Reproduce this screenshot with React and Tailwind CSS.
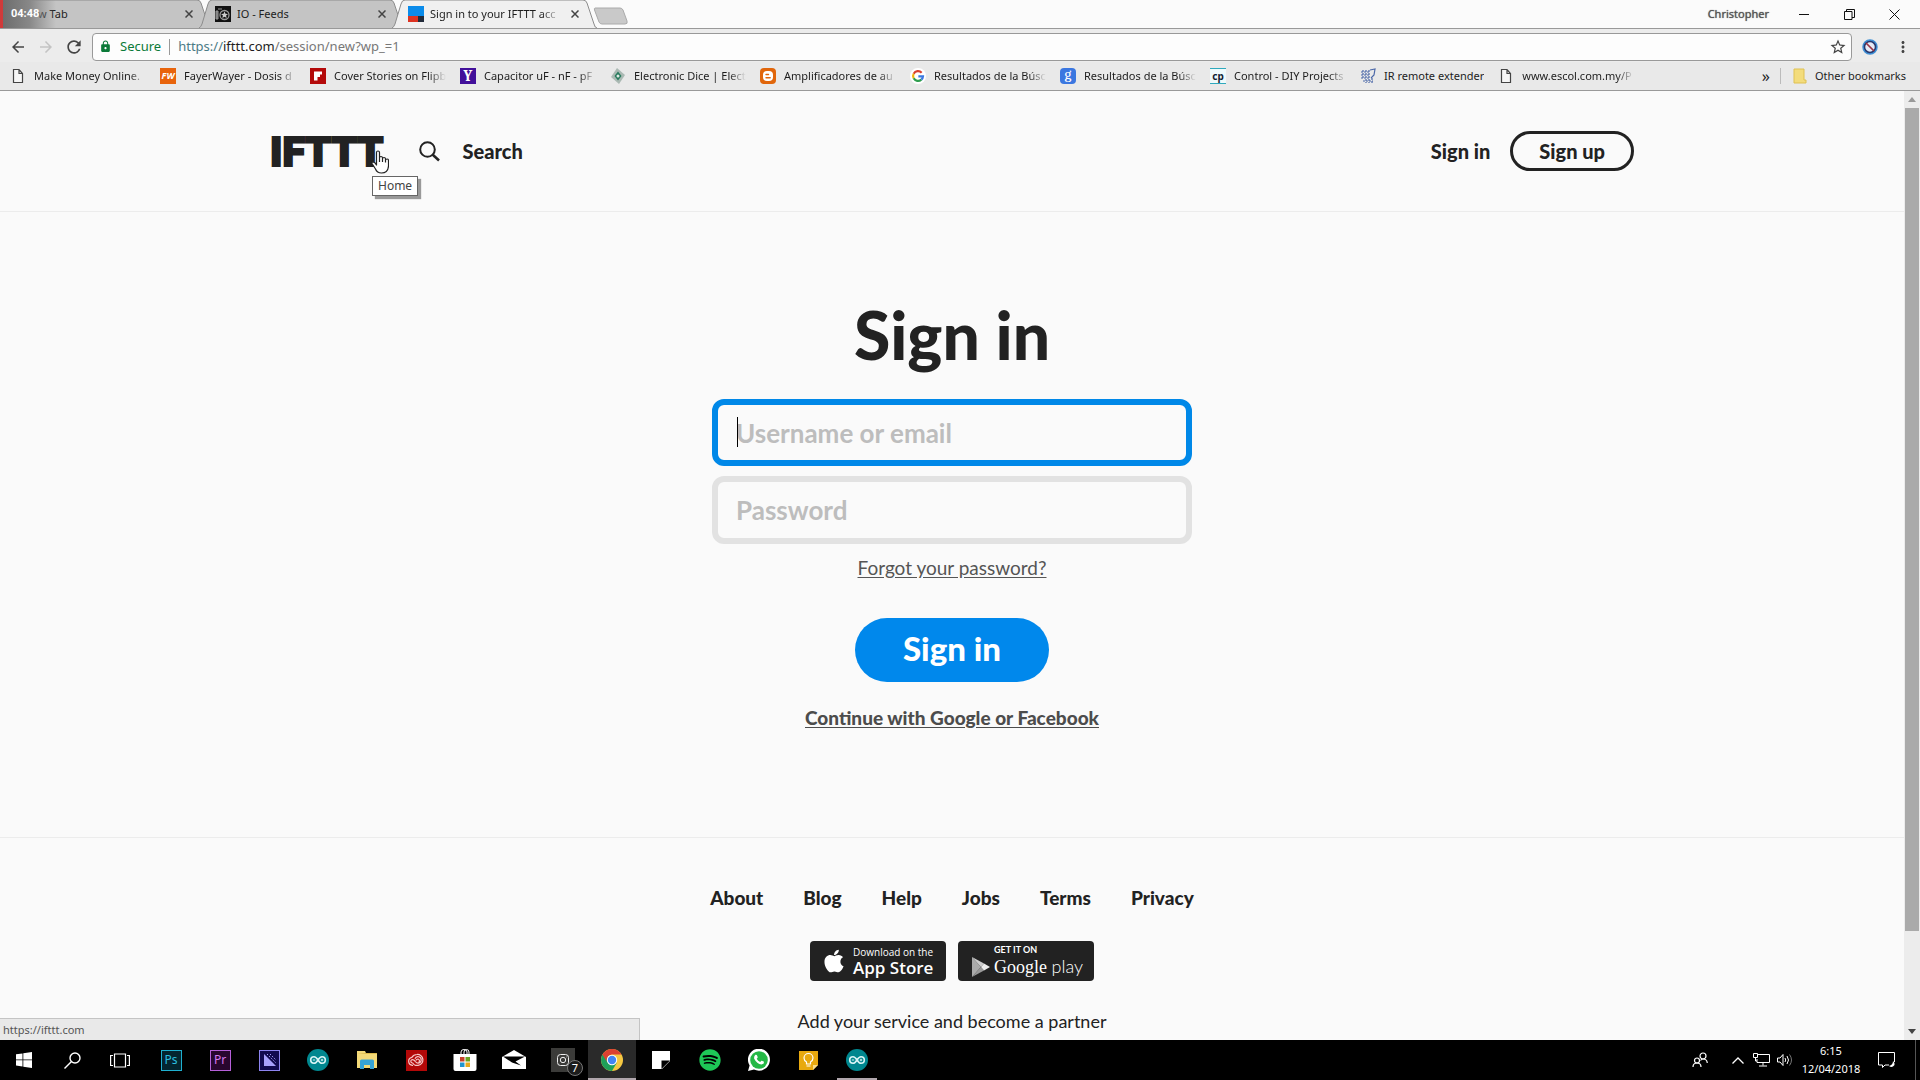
import React from 'react';
import { FaApple, FaSpotify } from 'react-icons/fa';
import { MdArrowBack, MdArrowForward, MdRefresh, MdLock, MdStarBorder, MdMoreVert } from 'react-icons/md';

const TabShape = ({ active }) => (
    <svg className="absolute inset-0 h-full w-full" viewBox="0 0 205 28" preserveAspectRatio="none" aria-hidden="true">
        <path d="M0 28 Q2 27 3 24 L9 4 Q10 0 13 0 H191 Q194 0 195 3 L202 24 Q203 28 205 28 Z" fill={active ? '#f0f0f0' : '#c4c4c4'} />
        <path d="M0 28 Q2 27 3 24 L9 4 Q10 0 13 0 H191 Q194 0 195 3 L202 24 Q203 28 205 28" fill="none" stroke="#8c8c8c" strokeWidth="1" />
    </svg>
);

const Tab = ({ title, icon, active, first }) => (
    <div className={`relative h-7 w-[205px] shrink-0 ${active ? 'z-10' : ''} ${first ? 'ml-1.5' : '-ml-3'}`}>
        <TabShape active={active} />
        <div className={`relative flex h-full items-center gap-1.5 pr-3.5 ${first ? 'pl-8' : 'pl-4'}`}>
            {icon}
            <span className={`min-w-0 flex-1 overflow-hidden whitespace-nowrap text-[#1d1d1d] ${active ? '[mask-image:linear-gradient(to_right,black_85%,transparent)]' : ''}`}>{title}</span>
            <button aria-label="Close tab" className="flex h-4 w-4 items-center justify-center">
                <svg viewBox="0 0 8 8" className="h-2 w-2" stroke="#444" strokeWidth="1.5"><path d="M0.5 0.5l7 7M7.5 0.5l-7 7" /></svg>
            </button>
        </div>
    </div>
);

const FeedsIcon = () => (
    <svg viewBox="0 0 16 16" className="h-4 w-4 shrink-0">
        <rect width="16" height="16" fill="#111" />
        <path d="M1 5h2v8H1zM3 3h4" stroke="#999" strokeWidth="1" fill="#777" />
        <circle cx="9.5" cy="9" r="4.5" fill="none" stroke="#999" strokeWidth="1.3" />
        <path d="M9.5 5.5l1 2.3 2.5.2-1.9 1.6.6 2.4-2.2-1.3-2.2 1.3.6-2.4L6 8l2.5-.2z" fill="#ccc" />
    </svg>
);

const IftttIcon = () => (
    <svg viewBox="0 0 16 16" className="h-4 w-4 shrink-0">
        <rect width="16" height="11" fill="#0a8bea" />
        <rect y="10" width="10" height="6" fill="#dd3322" />
        <rect x="10" y="10" width="6" height="6" fill="#222b3a" />
    </svg>
);

const DocIcon = () => (
    <svg viewBox="0 0 16 16" className="h-4 w-4 shrink-0" fill="#f6f6f6" stroke="#444" strokeWidth="1.2">
        <path d="M3.5 1.5h5.5l3.5 4v9h-9zM9 1.5v4h3.5" />
    </svg>
);

const Square = ({ bg, className = '', children }) => (
    <span className={`flex h-4 w-4 shrink-0 items-center justify-center ${bg} ${className}`}>{children}</span>
);

const bookmarks = [
    { title: 'Make Money Online.', icon: <DocIcon /> },
    { title: 'FayerWayer - Dosis d', icon: <Square bg="bg-[#e8640c]" className="text-[9px] font-bold italic text-white">FW</Square> },
    {
        title: 'Cover Stories on Flipb',
        icon: <Square bg="bg-[#b40a0a]"><svg viewBox="0 0 16 16" className="h-4 w-4" fill="#fff"><path d="M4 3.5h8v3H10v2.5H7.5v3.5H4z" /></svg></Square>,
    },
    {
        title: 'Capacitor uF - nF - pF',
        icon: <Square bg="bg-[#42109a]" className="font-serif text-[15px] font-bold text-white">Y</Square>,
    },
    {
        title: 'Electronic Dice | Elect',
        icon: (
            <svg viewBox="0 0 16 16" className="h-4 w-4 shrink-0">
                <path d="M7 0l8 7-6 9-8-7z" fill="#aab9b3" />
                <path d="M8 3.5l3.5 4.5L8 12.5 4.5 8z" fill="#277a5c" />
                <circle cx="8" cy="8" r="1.5" fill="#dfe9e4" />
            </svg>
        ),
    },
    {
        title: 'Amplificadores de au',
        icon: (
            <Square bg="bg-[#e1660b]" className="rounded-sm">
                <svg viewBox="0 0 16 16" className="h-4 w-4"><rect x="3" y="3" width="10" height="10" rx="4" fill="#fff" /><path d="M6 6.5h2.5M6 9.7h4.2" stroke="#e1660b" strokeWidth="1.4" strokeLinecap="round" /></svg>
            </Square>
        ),
    },
    {
        title: 'Resultados de la Búsc',
        icon: (
            <svg viewBox="0 0 48 48" className="h-4 w-4 shrink-0">
                <circle cx="24" cy="24" r="24" fill="#fff" />
                <g fill="none" strokeWidth="6.5">
                    <path d="M35 14A15 15 0 0 0 11 17" stroke="#d8402f" />
                    <path d="M11 17A15 15 0 0 0 11 31" stroke="#efb50e" />
                    <path d="M11 31A15 15 0 0 0 34 35" stroke="#2f9e4f" />
                    <path d="M34 35A15 15 0 0 0 39 25H25" stroke="#3c78e0" />
                </g>
            </svg>
        ),
    },
    {
        title: 'Resultados de la Búsc',
        icon: <Square bg="bg-[#3b77e0]" className="rounded-sm pb-1 font-serif text-[15px] text-white">g</Square>,
    },
    {
        title: 'Control - DIY Projects',
        icon: <Square bg="bg-[#effafb]" className="border-y border-[#2fa9bd] text-[10px] font-bold text-[#123]">cp</Square>,
    },
    {
        title: 'IR remote extender',
        fits: true,
        icon: (
            <svg viewBox="0 0 16 16" className="h-4 w-4 shrink-0" stroke="#4b68a8" strokeWidth="1.2" fill="none">
                <path d="M1 4h9M1 7h9M1 10h9M3 13h10M3 2v9M6 2v13M9 2v13M12 10v5" strokeDasharray="2 1" />
                <path d="M10 2l5-1-1 6-3 3" />
            </svg>
        ),
    },
    { title: 'www.escol.com.my/P', icon: <DocIcon /> },
];

const BrowserChrome = () => (
    <header className="shrink-0 font-['Noto_Sans','Open_Sans',sans-serif] text-[11px] text-[#1d1d1d]">
        <div className="relative flex h-7 items-center justify-between bg-[#fbfbfb]">
            <div className="flex items-center">
                <Tab title="w Tab" first />
                <Tab title="IO - Feeds" icon={<FeedsIcon />} />
                <Tab title="Sign in to your IFTTT acc" icon={<IftttIcon />} active />
                <button aria-label="Open new tab" className="-ml-1 mt-1">
                    <svg viewBox="0 0 36 18" className="h-[18px] w-9"><path d="M2 1h25q2 0 3 2l4 11q1 3-2 3H9q-2 0-3-2L1.5 3q-.5-2 .5-2z" fill="#c9c9c9" stroke="#aaa" /></svg>
                </button>
            </div>
            <div className="flex items-center gap-[30px] pr-5">
                <span className="text-[11px] text-[#555] [text-shadow:0_0_1px_#555]">Christopher</span>
                <button aria-label="Minimize"><svg viewBox="0 0 11 11" className="h-[11px] w-[11px]" stroke="#111"><path d="M0 5.5h10" /></svg></button>
                <button aria-label="Restore" className="pl-1"><svg viewBox="0 0 11 11" className="h-[11px] w-[11px]" stroke="#111" fill="none"><path d="M.5 2.5h7.5v8H.5zM2.5 2.5v-2h8v8H8" /></svg></button>
                <button aria-label="Close" className="pl-1"><svg viewBox="0 0 11 11" className="h-[11px] w-[11px]" stroke="#111"><path d="M.5 .5l10 10M10.5 .5l-10 10" /></svg></button>
            </div>
            {/* recorder clock over the first tab */}
            <div className="absolute left-0 top-0 z-20 flex h-7 w-14 items-center border-l-[3px] border-[#d03a3a] bg-linear-to-r from-[#6d6d6d] via-[#888] via-50% to-transparent pl-2 font-['Roboto',sans-serif] font-bold text-white"><span>04:48</span></div>
        </div>

        <div className="flex h-[34px] items-center border-t border-[#999] bg-[#ececec] pl-[9px] pr-2 pt-0.5">
            <button aria-label="Back" className="mr-2.5"><MdArrowBack size={18} color="#444" /></button>
            <button aria-label="Forward" className="mr-[9px]"><MdArrowForward size={18} color="#c3c3c3" /></button>
            <button aria-label="Reload" className="mr-2"><MdRefresh size={20} color="#444" /></button>
            <div className="flex h-7 flex-1 items-center rounded-sm border border-[#999] bg-[#fdfdfd] pl-1.5 pr-1">
                <MdLock size={13} color="#0b7a38" />
                <span className="ml-2 text-[13px] text-[#0b7a38]">Secure</span>
                <span className="mx-2 h-4 border-l border-[#999]" />
                <div className="flex-1 text-[13px] text-[#777]"><span className="text-[#4b7a85]">https://</span><span className="text-[#1d1d1d]">ifttt.com</span>/session/new?wp_=1</div>
                <button aria-label="Bookmark this page"><MdStarBorder size={18} color="#444" /></button>
            </div>
            <svg viewBox="0 0 16 16" className="ml-2.5 mr-4 h-4 w-4"><circle cx="8" cy="8" r="6.5" fill="#e6eaf5" stroke="#3f8fd4" strokeWidth="2.5" /><circle cx="8" cy="8" r="5.5" fill="none" stroke="#28386e" strokeWidth="1.5" /><path d="M4 4l8 8" stroke="#993344" strokeWidth="1.7" /></svg>
            <button aria-label="Menu"><MdMoreVert size={18} color="#444" /></button>
        </div>

        <nav className="flex h-[29px] items-center border-b border-[#999] bg-[#e9e9e9] pl-2.5 pr-3.5">
            {bookmarks.map((b, i) => (
                <a key={i} href="#bookmark" className="mr-3.5 flex shrink-0 items-center gap-2">
                    {b.icon}
                    <span className={`overflow-hidden whitespace-nowrap ${b.fits ? '' : 'w-28 [mask-image:linear-gradient(to_right,black_85%,transparent)]'}`}>{b.title}</span>
                </a>
            ))}
            <button aria-label="More bookmarks" className="ml-auto mr-2.5 text-[16px] leading-4">»</button>
            <a href="#other" className="flex items-center gap-2 border-l border-[#bbb] pl-3">
                <svg viewBox="0 0 14 16" className="h-4 w-3.5"><path d="M1 1h10v11h2v3H1z" fill="#f3dc7c" stroke="#dfc153" /></svg>
                Other bookmarks
            </a>
        </nav>
    </header>
);

const links = ['About', 'Blog', 'Help', 'Jobs', 'Terms', 'Privacy'];

const SignInPage = () => (
    <div className="min-w-0 flex-1 font-['Lato',sans-serif] text-[18px] leading-6 text-[#222]">
        <div className="border-b border-[#ececec]">
            <div className="mx-auto flex h-[120px] max-w-[1364px] items-center">
                <a href="#home" className="relative pt-0.5 font-['Roboto',sans-serif] text-[41px] font-black leading-none [-webkit-text-stroke:2px_#222]">
                    IFTTT
                    <svg viewBox="0 0 18 24" className="absolute -right-1.5 top-5 z-10 h-6 w-[18px]" fill="#fff" stroke="#222" strokeWidth="1.2" strokeLinejoin="round">
                        <path d="M5.5 12V2.5Q5.5 1 7 1t1.5 1.5V8q0-1.5 1.5-1.5T11.5 8v1Q11.5 7.5 13 7.5T14.5 9v1Q14.5 9 16 9t1.5 1.5V16Q17 23 10.5 23 6 23 4.5 19L1 13.5Q.5 12 2 11.8 4 12 5.5 15zM8.5 8v4M11.5 9v3M14.5 10v2.5" />
                    </svg>
                    <span className="absolute left-[102px] top-[46px] z-10 border border-[#666] bg-white px-[5px] font-['Noto_Sans',sans-serif] text-[12px] font-normal leading-[18px] text-[#444] shadow-[3px_3px_1px_#999] [-webkit-text-stroke:0]">Home</span>
                </a>
                <button className="ml-9 flex items-center gap-[22px] text-[20px] font-black">
                    <svg viewBox="0 0 21 21" className="h-[21px] w-[21px]" fill="none" stroke="#222" strokeWidth="2"><circle cx="8.5" cy="8.5" r="7.3" /><path d="M13.5 13.5l6.5 6" strokeWidth="2.5" /></svg>
                    Search
                </button>
                <a href="#signin" className="ml-auto mr-5 text-[20px] font-black">Sign in</a>
                <a href="#signup" className="rounded-full border-[3px] border-[#222] px-[26px] py-[5px] text-[20px] font-black leading-6">Sign up</a>
            </div>
        </div>

        <main className="border-b border-[#ececec] pb-[107px] pt-[87px]">
            <form className="mx-auto flex w-[480px] flex-col items-center" onSubmit={(e) => e.preventDefault()}>
                <h1 className="mb-7 text-[66px] font-black leading-[72px]">Sign in</h1>
                <div className="relative w-full">
                    <input type="text" aria-label="Username or email" placeholder="Username or email" className="block h-[67px] w-full rounded-xl border-[6px] border-[#0088e8] bg-transparent px-[18px] text-[26px] font-bold outline-none placeholder:text-[#bdbdbd]" />
                    <span className="absolute left-[25px] top-[18px] h-[30px] w-px bg-black" />
                </div>
                <input type="password" aria-label="Password" placeholder="Password" className="mt-2.5 block h-[68px] w-full rounded-xl border-[6px] border-[#e2e2e2] bg-transparent px-[18px] text-[26px] font-bold outline-none placeholder:text-[#bdbdbd]" />
                <a href="#forgot" className="mt-3 text-[19px] text-[#555] underline underline-offset-2">Forgot your password?</a>
                <button className="mt-[38px] h-16 rounded-full bg-[#0088ec] px-12 pb-1 text-[33px] font-black text-white">Sign in</button>
                <a href="#continue" className="mt-6 text-[19px] font-black text-[#4c4c4c] underline underline-offset-2">Continue with Google or Facebook</a>
            </form>
        </main>

        <footer className="flex flex-col items-center pt-12">
            <nav className="flex gap-10 text-[19px] font-black">
                {links.map((l) => <a key={l} href="#footer">{l}</a>)}
            </nav>
            <div className="mt-[31px] flex gap-3">
                <a href="#appstore" className="flex h-10 w-[136px] items-center gap-1.5 rounded bg-[#222] pl-[11px] text-white">
                    <FaApple size={26} />
                    <span className="flex flex-col whitespace-nowrap font-['Open_Sans',sans-serif]">
                        <span className="text-[10px] leading-3">Download on the</span>
                        <span className="text-[17px] font-semibold leading-[19px]">App Store</span>
                    </span>
                </a>
                <a href="#googleplay" className="flex h-10 w-[136px] items-center gap-1 rounded bg-[#222] pl-3.5 text-white">
                    <svg viewBox="0 0 18 20" className="mt-3 h-5 w-[18px]"><path d="M0 0l9 10-9 10z" fill="#aaa" /><path d="M0 0l12 6.5L9 10z" fill="#ccc" /><path d="M0 20l12-6.5L9 10z" fill="#999" /><path d="M12 6.5l6 3.5-6 3.5L9 10z" fill="#eee" /></svg>
                    <span className="flex flex-col font-['Lato',sans-serif]">
                        <span className="text-[9px] font-bold leading-[11px]">GET IT ON</span>
                        <span className="text-[18px] leading-[22px]"><span className="font-['Liberation_Serif',serif]">Google</span> <span className="font-light">play</span></span>
                    </span>
                </a>
            </div>
            <a href="#partner" className="mt-7">Add your service and become a partner</a>
        </footer>
    </div>
);

const Arduino = () => (
    <svg viewBox="0 0 22 22" className="h-[22px] w-[22px]"><circle cx="11" cy="11" r="11" fill="#00878f" /><path d="M11 11C9.5 8.5 8.5 7.7 7 7.7a3.3 3.3 0 0 0 0 6.6c1.5 0 2.5-.8 4-3.3s2.5-3.3 4-3.3a3.3 3.3 0 0 1 0 6.6c-1.5 0-2.5-.8-4-3.3z" fill="none" stroke="#d8f4f5" strokeWidth="1.6" /><path d="M5.8 11h2.4M13.8 11h2.4M15 9.8v2.4" stroke="#d8f4f5" /></svg>
);

const pinned = [
    { name: 'Photoshop', icon: <span className="flex h-[21px] w-[21px] items-center justify-center border border-[#1fb0d0] bg-[#04252f] text-[12px] text-[#2bc0e0]">Ps</span> },
    { name: 'Premiere', icon: <span className="flex h-[21px] w-[21px] items-center justify-center border border-[#b55fd8] bg-[#28062e] text-[12px] text-[#d478ee]">Pr</span> },
    { name: 'Media Encoder', icon: <svg viewBox="0 0 21 21" className="h-[21px] w-[21px]"><rect x=".5" y=".5" width="20" height="20" fill="#11094f" stroke="#8d84f0" /><path d="M5 4l12 12H5z" fill="#a79ffc" /><path d="M8 4l9 9M11 4l6 6" stroke="#a79ffc" strokeDasharray="1.5 1.5" /></svg> },
    { name: 'Arduino', icon: <Arduino /> },
    { name: 'File Explorer', icon: <svg viewBox="0 0 22 20" className="h-5 w-[22px]"><path d="M1 1h8l1 2h11v15H1z" fill="#f3d978" /><path d="M1 4h20v-1H10z" fill="#dcb94b" /><path d="M4 19v-8q0-1.5 1.5-1.5h11Q18 9.5 18 11v8h-4v-4H8v4z" fill="#36a3d6" /></svg> },
    { name: 'Creative Cloud', icon: <svg viewBox="0 0 21 21" className="h-[21px] w-[21px]" fill="none" stroke="#f6c9c9" strokeWidth="1.2"><rect width="21" height="21" fill="#b30808" stroke="none" /><path d="M7 15.3H6.5a4 4 0 0 1-.7-7.9Q7.5 4.5 11 4.5a5.4 5.4 0 0 1 1 10.8H9.5q-1.5 0-3-2.5" /><path d="M6.5 13a1.7 1.7 0 0 1 0-3.4q1.6 0 2.8 1.9 1.2 1.6 2.7 1.6a3.2 3.2 0 1 0-3-4.3M9.8 10.5Q10.5 9 12 9a1.9 1.9 0 0 1 .5 3.5" /></svg> },
    { name: 'Store', icon: <svg viewBox="0 0 24 24" className="h-6 w-6"><path d="M8 7V4q0-2.5 3-2.5T14 4v3M11 7V4q0-2.5 2.5-2.5T16 4v3" fill="none" stroke="#fff" /><path d="M.5 6h23v15q0 2-2 2h-19q-2 0-2-2z" fill="#fff" /><path d="M7 9h4.5v4.5H7z" fill="#c8402a" /><path d="M12.5 9H17v4.5h-4.5z" fill="#6aa321" /><path d="M7 14.5h4.5V19H7z" fill="#2195cf" /><path d="M12.5 14.5H17V19h-4.5z" fill="#e8a91c" /></svg> },
    { name: 'Mail', icon: <svg viewBox="0 0 24 20" className="h-5 w-6"><path d="M0 7L12 0l12 7v12H0z" fill="#fff" /><path d="M1 6.5h22l-9.5 5 5.5 4-9-3z" fill="#000" /></svg> },
    {
        name: 'Instagram',
        icon: (
            <span className="relative flex h-6 w-6 items-center justify-center bg-[#3b3b39]">
                <svg viewBox="0 0 12 12" className="h-3 w-3" fill="none" stroke="#eee"><rect x=".5" y=".5" width="11" height="11" rx="3" /><circle cx="6" cy="6" r="2.7" /><path d="M9 3h.5" /></svg>
                <span className="absolute -right-2 top-3 flex h-4 w-4 items-center justify-center rounded-full border border-[#777] bg-[#1c1c1c] text-[11px] text-white">7</span>
            </span>
        ),
    },
    {
        name: 'Chrome', active: true, icon: (
            <svg viewBox="0 0 22 22" className="h-[22px] w-[22px]">
                <circle cx="11" cy="11" r="11" fill="#f5c842" />
                <path d="M1.5 5.5A11 11 0 0 0 11 22l4.8-8.3L11 11z" fill="#1ea05a" />
                <path d="M1.5 5.5A11 11 0 0 1 20.5 5.5H11A5.5 5.5 0 0 0 6 13z" fill="#dc4132" />
                <circle cx="11" cy="11" r="5.2" fill="#fff" /><circle cx="11" cy="11" r="4.2" fill="#4285f4" />
            </svg>
        )
    },
    { name: 'Sticky Notes', icon: <svg viewBox="0 0 18 18" className="h-[18px] w-[18px]"><path d="M0 0h18v18H0z" fill="#fff" /><path d="M9.5 9.5H18L9.5 18z" fill="#000" /><path d="M18 10v8h-8z" fill="#000" /></svg> },
    { name: 'Spotify', icon: <span className="rounded-full bg-black"><FaSpotify size={22} color="#1ec757" /></span> },
    { name: 'WhatsApp', icon: <svg viewBox="0 0 22 22" className="h-[22px] w-[22px]"><path d="M0 22l1.6-5.5A11 11 0 1 1 6 20.5z" fill="#fff" /><circle cx="11" cy="11" r="8.8" fill="#25b845" /><path d="M7.5 5.8q1.2-.4 1.7 1l.5 1.4q0 .6-1 1.5 1.2 2.2 3.5 3.2l1.2-1.2q.4-.3 2.5 1 .4 2.5-2.5 2.8-4.5-.5-7.2-5.7-.5-2.5 1.3-4z" fill="#fff" /></svg> },
    { name: 'Keep', icon: <svg viewBox="0 0 19 19" className="h-[19px] w-[19px]"><path d="M0 0h19v14l-5 5H0z" fill="#e8a90f" /><path d="M14 19v-5h5z" fill="#f8dc8a" /><path d="M7.5 13v-2Q5 9.5 5 7a4.5 4.5 0 0 1 9 0q0 2.5-2.5 4v2zM7.5 15h4" fill="none" stroke="#fff" strokeWidth="1.2" /></svg> },
    { name: 'Arduino IDE', running: true, icon: <Arduino /> },
];

const Taskbar = () => (
    <footer className="flex h-10 shrink-0 items-center bg-black font-['Noto_Sans',sans-serif] text-[12px] text-white">
        <button aria-label="Start" className="flex w-12 justify-center"><svg viewBox="0 0 16 16" className="h-4 w-4" fill="#fff"><path d="M0 2.3l6.5-.9v6.1H0zM7.3 1.3L16 0v7.5H7.3zM0 8.3h6.5v6.2L0 13.6zM7.3 8.3H16V16l-8.7-1.3z" /></svg></button>
        <button aria-label="Search" className="flex w-12 justify-center"><svg viewBox="0 0 17 17" className="h-[17px] w-[17px]" fill="none" stroke="#fff" strokeWidth="1.4"><circle cx="11" cy="6" r="5" /><path d="M7.5 9.5L.5 16.5" /></svg></button>
        <button aria-label="Task view" className="flex w-12 justify-center"><svg viewBox="0 0 20 15" className="h-[15px] w-5" fill="none" stroke="#fff" strokeWidth="1.2"><path d="M4.5 1h11v13h-11zM3 2.5H.6v10H3M17 2.5h2.4v10H17" /></svg></button>
        <div className="ml-[3px] flex gap-px">
            {pinned.map((p) => (
                <button key={p.name} aria-label={p.name} className={`relative flex h-10 w-12 items-center justify-center ${p.active ? 'bg-[#2a2a2a]' : ''}`}>
                    {p.icon}
                    {p.active && <span className="absolute inset-x-0 bottom-0 h-0.5 bg-[#b0a6ac]" />}
                    {p.running && <span className="absolute inset-x-1 bottom-0 h-0.5 bg-[#b0a6ac]" />}
                </button>
            ))}
        </div>
        <div className="ml-auto flex h-full items-center">
            <svg viewBox="0 0 16 16" className="mr-6 h-4 w-4" fill="none" stroke="#fff" strokeWidth="1.2"><circle cx="11" cy="4" r="3" /><circle cx="5" cy="8.5" r="2.5" /><path d="M1 15q0-4 4-4t4 4M11 7q4 0 4.3 4M11 7q-1.5 0-2.5 1.5" /></svg>
            <svg viewBox="0 0 12 7" className="mr-[9px] h-[7px] w-3" fill="none" stroke="#fff" strokeWidth="1.3"><path d="M.5 6.5L6 1l5.5 5.5" /></svg>
            <svg viewBox="0 0 17 14" className="mr-[7px] h-3.5 w-[17px]" fill="none" stroke="#fff"><path d="M5 1.5h11.5v8H4V6M10 9.5v3M6 13h8M.5 .5h4v4h-4zM2.5 4.5V8H4" /></svg>
            <svg viewBox="0 0 17 14" className="mr-[7px] h-3.5 w-[17px]" fill="none" stroke="#fff"><path d="M.5 5h2.5l3-3.5v11L3 9H.5zM8 5q1.5 2 0 4M10 3q3 4 0 8" /><path d="M12.5 1.5q4 5.5 0 11" stroke="#777" /></svg>
            <div className="flex w-[60px] flex-col items-center text-[11px] leading-[18px]"><span>6:15</span><span>12/04/2018</span></div>
            <svg viewBox="0 0 17 17" className="ml-[17px] mr-5 h-[17px] w-[17px]" fill="none" stroke="#fff"><path d="M11 13H7l-2.5 2.5V13H.5V.5h16V10" /><path d="M15 9q0 4-4 5 3 2.5 5.5-1Q17 10.5 15 9z" fill="#fff" stroke="none" /></svg>
            <span className="mr-1 h-full border-l border-[#555]" />
        </div>
    </footer>
);

export default function App() {
    return (
        <div className="flex h-screen flex-col overflow-hidden bg-[#fafafa]">
            <BrowserChrome />
            <div className="relative flex min-h-0 flex-1 overflow-hidden">
                <SignInPage />
                <div className="flex w-4 shrink-0 flex-col items-center justify-between bg-[#ececec] py-1.5">
                    <svg viewBox="0 0 8 5" className="h-[5px] w-2" fill="#999"><path d="M0 5l4-5 4 5z" /></svg>
                    <div className="mt-1.5 w-3.5 flex-[825] bg-[#aaa]" />
                    <div className="flex-[98]" />
                    <svg viewBox="0 0 8 5" className="h-[5px] w-2" fill="#444"><path d="M0 0l4 5 4-5z" /></svg>
                </div>
                <div className="absolute bottom-0 left-0 w-1/3 border-r border-t border-[#c4c4c4] bg-[#e9e9e9] pl-[3px] font-['Noto_Sans',sans-serif] text-[11px] leading-[21px] text-[#555]">https://ifttt.com</div>
            </div>
            <Taskbar />
        </div>
    );
}
